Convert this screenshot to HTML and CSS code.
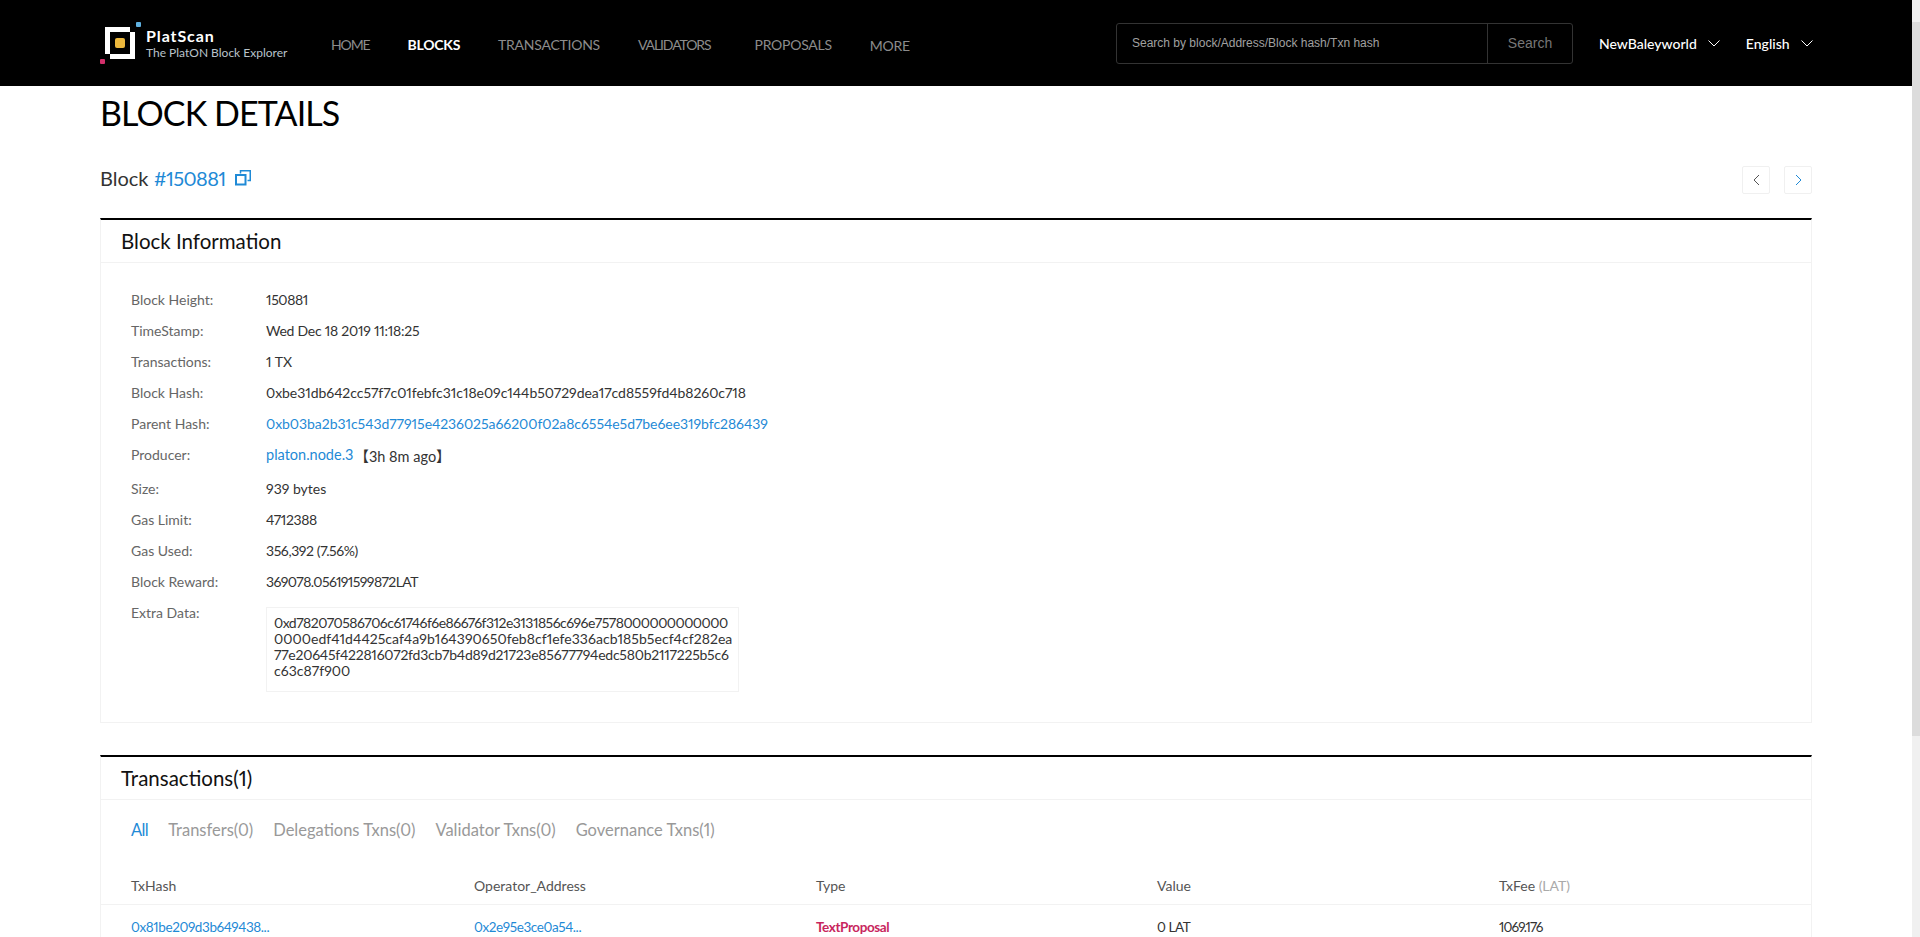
FILE: index.html
```html
<!DOCTYPE html>
<html lang="en">
<head>
  <meta charset="UTF-8" />
  <title>PlatScan - Block Details</title>
  <link rel="stylesheet" href="styles.css">
</head>
<body>

  <div class="page">
    <!-- Header -->
    <header class="header">
      <div class="brand">
        <svg class="brand-logo" width="41" height="42" viewBox="0 0 41 42">
          <rect x="36" y="0" width="5" height="5" rx="1" fill="#5fb0e0" />
          <rect x="0" y="37" width="5" height="5" rx="1" fill="#d12f6a" />
          <path d="M5 5H30V10H35V37H10V32H5ZM10 10V32H30V10Z" fill="#fff" fill-rule="evenodd" />
          <rect x="15" y="16" width="10" height="10" rx="2" fill="#ecb83d" />
        </svg>
        <div class="brand-text">
          <div class="brand-name">PlatScan</div>
          <div class="brand-sub">The PlatON Block Explorer</div>
        </div>
      </div>
      <nav class="nav">
        <a class="nav-item narrow">HOME</a>
        <a class="nav-item active">BLOCKS</a>
        <a class="nav-item">TRANSACTIONS</a>
        <a class="nav-item narrow">VALIDATORS</a>
        <a class="nav-item wide">PROPOSALS</a>
        <a class="nav-item more">MORE</a>
      </nav>
      <div class="search">
        <div class="search-input">Search by block/Address/Block hash/Txn hash</div>
        <div class="search-btn">Search</div>
      </div>
      <div class="menu-drop net">NewBaleyworld
        <svg width="12" height="7" viewBox="0 0 12 7"><path d="M.5 .5l5.500 5.500 5.500-5.500" fill="none" stroke="#fff" stroke-width="1" /></svg>
      </div>
      <div class="menu-drop lang">English
        <svg width="12" height="7" viewBox="0 0 12 7"><path d="M.5 .5l5.500 5.500 5.500-5.500" fill="none" stroke="#fff" stroke-width="1" /></svg>
      </div>
    </header>

    <main class="content">
      <h1 class="page-title">BLOCK DETAILS</h1>

      <div class="block-bar">
        <div class="block-no">Block <a class="link block-link">#150881</a>
          <svg class="copy-icon" width="16" height="16" viewBox="0 0 16 16">
            <path d="M5.500 3.500V.75h9.750v9.750H12.500" fill="none" stroke="#1f8ad6" stroke-width="1.500" />
            <rect x="1" y="5" width="9.500" height="9.500" fill="none" stroke="#1f8ad6" stroke-width="2" />
          </svg>
        </div>
        <div class="pager">
          <div class="pager-btn"><svg width="7" height="12" viewBox="0 0 7 12"><path d="M6 1L1 6l5 5" fill="none" stroke="#555" /></svg></div>
          <div class="pager-btn"><svg width="7" height="12" viewBox="0 0 7 12"><path d="M1 1l5 5-5 5" fill="none" stroke="#1f8ad6" /></svg></div>
        </div>
      </div>

      <!-- Block Information -->
      <section class="card info-card">
        <h2 class="card-title">Block Information</h2>
        <div class="info-list">
          <div class="info-row"><span class="info-label">Block Height:</span><span class="value">150881</span></div>
          <div class="info-row"><span class="info-label">TimeStamp:</span><span class="value stamp">Wed Dec 18 2019 11:18:25</span></div>
          <div class="info-row"><span class="info-label">Transactions:</span><span>1 TX</span></div>
          <div class="info-row"><span class="info-label">Block Hash:</span><span class="hash">0xbe31db642cc57f7c01febfc31c18e09c144b50729dea17cd8559fd4b8260c718</span></div>
          <div class="info-row"><span class="info-label">Parent Hash:</span><a class="link hash">0xb03ba2b31c543d77915e4236025a66200f02a8c6554e5d7be6ee319bfc286439</a></div>
          <div class="info-row producer"><span class="info-label">Producer:</span><a class="link node">platon.node.3</a><span class="ago">【3h 8m ago】</span></div>
          <div class="info-row"><span class="info-label">Size:</span><span>939 bytes</span></div>
          <div class="info-row"><span class="info-label">Gas Limit:</span><span class="value">4712388</span></div>
          <div class="info-row"><span class="info-label">Gas Used:</span><span class="value">356,392 (7.56%)</span></div>
          <div class="info-row"><span class="info-label">Block Reward:</span><span class="value reward">369078.056191599872LAT</span></div>
          <div class="info-row"><span class="info-label">Extra Data:</span>
            <div class="extra-box"><span class="zero-line">0xd782070586706c61746f6e86676f312e3131856c696e7578000000000000</span><br>0000edf41d4425caf4a9b164390650feb8cf1efe336acb185b5ecf4cf282ea<br><span class="wide-line">77e20645f422816072fd3cb7b4d89d21723e85677794edc580b2117225b5c6</span><br>c63c87f900</div>
          </div>
        </div>
      </section>

      <!-- Transactions -->
      <section class="card tx-card">
        <h2 class="card-title">Transactions(1)</h2>
        <div class="tabs">
          <a class="tab link tab-all">All</a>
          <a class="tab">Transfers(0)</a>
          <a class="tab">Delegations Txns(0)</a>
          <a class="tab">Validator Txns(0)</a>
          <a class="tab">Governance Txns(1)</a>
        </div>
        <div class="tx-head tx-grid">
          <div>TxHash</div>
          <div>Operator_Address</div>
          <div>Type</div>
          <div>Value</div>
          <div>TxFee <span class="unit">(LAT)</span></div>
        </div>
        <div class="tx-row tx-grid">
          <a class="link">0x81be209d3b649438...</a>
          <a class="link">0x2e95e3ce0a54...</a>
          <div class="tx-type">TextProposal</div>
          <div>0 LAT</div>
          <div class="tx-fee">1069.176</div>
        </div>
      </section>
    </main>
  </div>

  <!-- Scrollbar -->
  <div class="scrollbar"><div class="scroll-thumb"></div></div>

</body>
</html>
```

FILE: styles.css
```css
* {
  box-sizing: border-box;
}

html, body {
  margin: 0;
  padding: 0;
  height: 100%;
}

body {
  display: flex;
  font-family: Lato, 'Noto Sans CJK SC', sans-serif;
  font-size: 14px;
  font-variant-numeric: proportional-nums;
  color: #222;
  background: #fff;
  overflow: hidden;
}

.page {
  flex: 1;
  min-width: 0;
  height: 100%;
  overflow: hidden;
}

.scrollbar {
  flex: none;
  width: 8px;
  height: 100%;
  padding-top: 22px;
  background: #f0f0f0;
}

.scroll-thumb {
  height: 714px;
  background: #dcdcdc;
}

.link {
  color: #1f8ad6;
}

/* Header */
.header {
  height: 86px;
  background: #000;
  display: flex;
  align-items: center;
  padding: 0 100px;
  color: #fff;
}

.brand {
  display: flex;
  align-items: center;
  flex: none;
  width: 231px;
}

.brand-logo {
  margin-right: 5px;
  flex: none;
}

.brand-name {
  font-size: 16px;
  font-weight: 700;
  letter-spacing: .9px;
  line-height: 18px;
}

.brand-sub {
  font-size: 12px;
  color: #b9c3cb;
  line-height: 15px;
}

.nav {
  display: flex;
  flex: none;
  gap: 38px;
  font-size: 14px;
  letter-spacing: -.25px;
  color: #8c8c8c;
  width: 785px;
  padding-top: 4px;
}

.nav-item.active {
  color: #fff;
  font-weight: 700;
}

.nav-item.narrow {
  letter-spacing: -1.1px;
}

.nav-item.wide {
  margin-left: 6px;
}

.nav-item.more {
  padding-top: 1px;
}

.search {
  flex: none;
  width: 457px;
  height: 41px;
  border: 1px solid #333;
  border-radius: 3px;
  display: flex;
  align-items: center;
}

.search-input {
  flex: 1;
  height: 100%;
  line-height: 39px;
  padding-left: 15px;
  font-family: 'Liberation Sans', sans-serif;
  font-size: 12px;
  color: #a0a0a0;
}

.search-btn {
  width: 85px;
  height: 100%;
  line-height: 39px;
  text-align: center;
  border-left: 1px solid #333;
  color: #777;
  font-family: 'Liberation Sans', sans-serif;
  font-size: 14px;
}

.menu-drop {
  display: flex;
  flex: none;
  align-items: center;
  gap: 11px;
  font-size: 14px;
  font-weight: 500;
}

.net, .lang {
  margin-left: 26px;
}

/* Page */
.content {
  padding: 0 100px;
}

.page-title {
  margin: 5px 0 0;
  font-size: 34px;
  font-weight: 400;
  line-height: 44px;
  letter-spacing: -.9px;
  color: #000;
}

.block-bar {
  display: flex;
  justify-content: space-between;
  align-items: center;
  margin-top: 27px;
  height: 36px;
}

.block-no {
  font-size: 20px;
  color: #333;
  padding-bottom: 4px;
}

.block-link {
  letter-spacing: -.6px;
}

.copy-icon {
  margin-left: 4px;
}

.pager {
  display: flex;
  gap: 14px;
}

.pager-btn {
  width: 28px;
  height: 28px;
  border: 1px solid #f0f0f0;
  border-radius: 2px;
  display: flex;
  align-items: center;
  justify-content: center;
}

/* Cards */
.card {
  border: 1px solid #f2f2f2;
  border-top: 2px solid #000;
}

.info-card {
  margin-top: 20px;
  height: 505px;
}

.tx-card {
  margin-top: 32px;
}

.card-title {
  margin: 0;
  height: 43px;
  line-height: 42px;
  padding-left: 20px;
  font-size: 20.5px;
  font-weight: 400;
  color: #111;
  border-bottom: 1px solid #f2f2f2;
}

.info-list {
  padding: 21px 30px 0;
}

.info-row {
  display: flex;
  height: 31px;
  line-height: 31px;
  color: #333;
}

.info-label {
  width: 135px;
  flex: none;
  color: #666;
}

.value {
  letter-spacing: -.4px;
}

.value.stamp {
  letter-spacing: -.25px;
}

.value.reward {
  letter-spacing: -.6px;
}

.hash {
  letter-spacing: -.05px;
}

.producer {
  height: 34px;
}

.node {
  font-size: 14.5px;
}

.ago {
  margin: 2px 0 0 1px;
  font-size: 14.5px;
}

.extra-box {
  width: 473px;
  height: 85px;
  margin-top: 10px;
  padding: 7px;
  border: 1px solid #f2f2f2;
  line-height: 16px;
  letter-spacing: .04px;
  white-space: nowrap;
}

.zero-line {
  letter-spacing: -.53px;
}

.wide-line {
  letter-spacing: -.24px;
}

.tabs {
  display: flex;
  gap: 20px;
  padding: 19px 30px 0;
  font-size: 16.5px;
  line-height: 22px;
  color: #999;
}

.tab-all {
  letter-spacing: -.6px;
}

.tx-grid {
  display: grid;
  grid-template-columns: 343px 342px 341px 342px 1fr;
  padding-left: 30px;
}

.tx-head {
  margin-top: 24px;
  height: 40px;
  line-height: 42px;
  border-bottom: 1px solid #f2f2f2;
  color: #555;
}

.tx-row {
  line-height: 44px;
  font-size: 13.5px;
  letter-spacing: -.4px;
  color: #333;
}

.tx-type {
  color: #c8265e;
  font-weight: 700;
}

.tx-fee {
  letter-spacing: -.9px;
}

.unit {
  color: #aaa;
}
```
